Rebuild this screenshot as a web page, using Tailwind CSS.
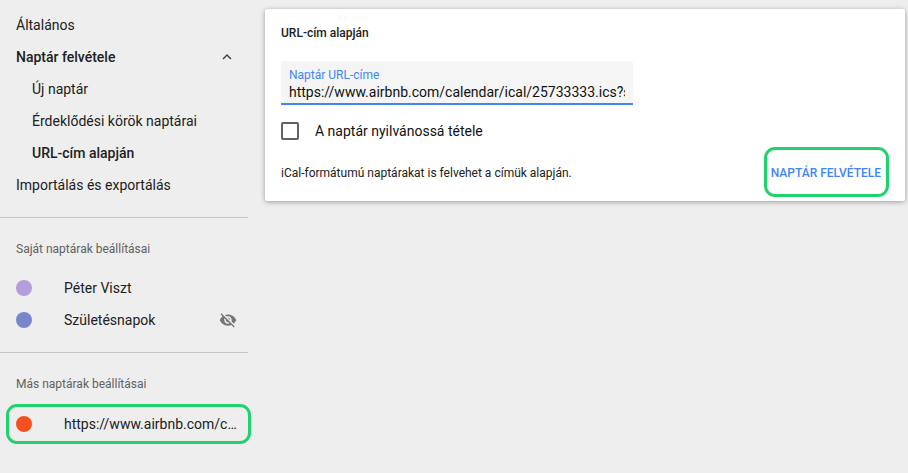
<!DOCTYPE html>
<html lang="hu">
<head>
    <meta charset="UTF-8">
    <meta name="viewport" content="width=device-width, initial-scale=1.0">
    <title>Naptár felvétele</title>
    <script src="https://cdn.jsdelivr.net/npm/@tailwindcss/browser@4"></script>
</head>
<body class="bg-[#eeeeee] h-[473px] w-[908px] overflow-hidden font-['Roboto',sans-serif] text-[#212121] flex">
    <!-- settings sidebar -->
    <aside class="w-[265px] shrink-0 pt-[9px]">
        <nav class="w-[248px] text-[14px]">
            <div class="h-8 pl-4 flex items-center">Általános</div>
            <div class="h-8 pl-4 pr-[12px] flex items-center justify-between font-medium">
                <span>Naptár felvétele</span>
                <svg class="w-[18px] h-[18px] text-[#3c4043]" viewBox="0 0 24 24" fill="currentColor"><path d="M7.41 15.41 12 10.83l4.59 4.58L18 14l-6-6-6 6z"/></svg>
            </div>
            <div class="h-8 pl-8 flex items-center">Új naptár</div>
            <div class="h-8 pl-8 flex items-center">Érdeklődési körök naptárai</div>
            <div class="h-8 pl-8 flex items-center font-medium">URL-cím alapján</div>
            <div class="h-8 pl-4 flex items-center">Importálás és exportálás</div>
        </nav>

        <div class="w-[248px] mt-4 border-t border-[#c4c4c4]"></div>

        <section class="w-[248px] text-[14px]">
            <h2 class="h-[14px] mt-6 pl-4 flex items-center text-[12px] text-[#616161] font-normal">Saját naptárak beállításai</h2>
            <div class="mt-[16px] h-8 pl-4 flex items-center">
                <span class="w-4 h-4 rounded-full bg-[#b39ddb]"></span>
                <span class="ml-8">Péter Viszt</span>
            </div>
            <div class="h-8 pl-4 pr-[11px] flex items-center">
                <span class="w-4 h-4 rounded-full bg-[#7986cb]"></span>
                <span class="ml-8 flex-1">Születésnapok</span>
                <svg class="w-[18px] h-[18px] text-[#757575]" viewBox="0 0 24 24" fill="currentColor"><path d="M12 7c2.76 0 5 2.24 5 5 0 .65-.13 1.26-.36 1.83l2.92 2.92c1.51-1.26 2.7-2.89 3.43-4.75-1.73-4.39-6-7.5-11-7.5-1.4 0-2.74.25-3.98.7l2.16 2.16C10.74 7.13 11.35 7 12 7zM2 4.27l2.28 2.28.46.46C3.08 8.3 1.78 10.02 1 12c1.73 4.39 6 7.5 11 7.5 1.55 0 3.03-.3 4.38-.84l.42.42L19.73 22 21 20.73 3.27 3 2 4.27zM7.53 9.8l1.55 1.55c-.05.21-.08.43-.08.65 0 1.66 1.34 3 3 3 .22 0 .44-.03.65-.08l1.55 1.55c-.67.33-1.41.53-2.2.53-2.76 0-5-2.24-5-5 0-.79.2-1.53.53-2.2zm4.31-.78 3.15 3.15.02-.16c0-1.66-1.34-3-3-3l-.17.01z"/></svg>
            </div>
        </section>

        <div class="w-[248px] mt-4 border-t border-[#c4c4c4]"></div>

        <section class="w-[248px] text-[14px]">
            <h2 class="h-[14px] mt-6 pl-4 flex items-center text-[12px] text-[#616161] font-normal">Más naptárak beállításai</h2>
            <div class="relative mt-[13px] h-10 pl-4 pr-[11px] flex items-center">
                <span class="w-4 h-4 shrink-0 rounded-full bg-[#f4511e]"></span>
                <span class="ml-8 truncate">https://www.airbnb.com/calendar/ical/25733333.ics</span>
                <div class="absolute left-[6px] top-0 w-[245px] h-10 border-[3px] border-[#1ed36f] rounded-[11px]"></div>
            </div>
        </section>
    </aside>

    <!-- add by URL card -->
    <main class="pt-[9px]">
        <div class="w-[640px] h-[192px] bg-white rounded-[2px] shadow-[0_1px_5px_rgba(0,0,0,0.35)] pl-4 pr-4 pt-[16px]">
            <h1 class="text-[12px] font-medium leading-4">URL-cím alapján</h1>
            <div class="mt-5 w-[352px] h-[44px] bg-[#f5f5f5] rounded-t-[2px] border-b-2 border-[#4285f4] px-2 pt-[7px]">
                <div class="text-[12px] leading-[14px] text-[#4285f4]">Naptár URL-címe</div>
                <div class="w-[336px] overflow-hidden whitespace-nowrap text-[14px] leading-[20px] text-[#111111]">https://www.airbnb.com/calendar/ical/25733333.ics?s=abc</div>
            </div>
            <label class="mt-[17px] h-[18px] flex items-center text-[14px] text-[#111111]">
                <span class="w-[18px] h-[18px] border-2 border-[#616161] rounded-[2px]"></span>
                <span class="ml-4">A naptár nyilvánossá tétele</span>
            </label>
            <div class="mt-[25px] flex items-center justify-between">
                <p class="text-[12px] leading-4">iCal-formátumú naptárakat is felvehet a címük alapján.</p>
                <div class="relative flex">
                    <button class="text-[12px] font-medium text-[#4285f4] pr-[8px] leading-4">NAPTÁR FELVÉTELE</button>
                    <div class="absolute -left-[7px] -top-[18px] w-[125px] h-[50px] border-[3px] border-[#1ed36f] rounded-[11px]"></div>
                </div>
            </div>
        </div>
    </main>
</body>
</html>
